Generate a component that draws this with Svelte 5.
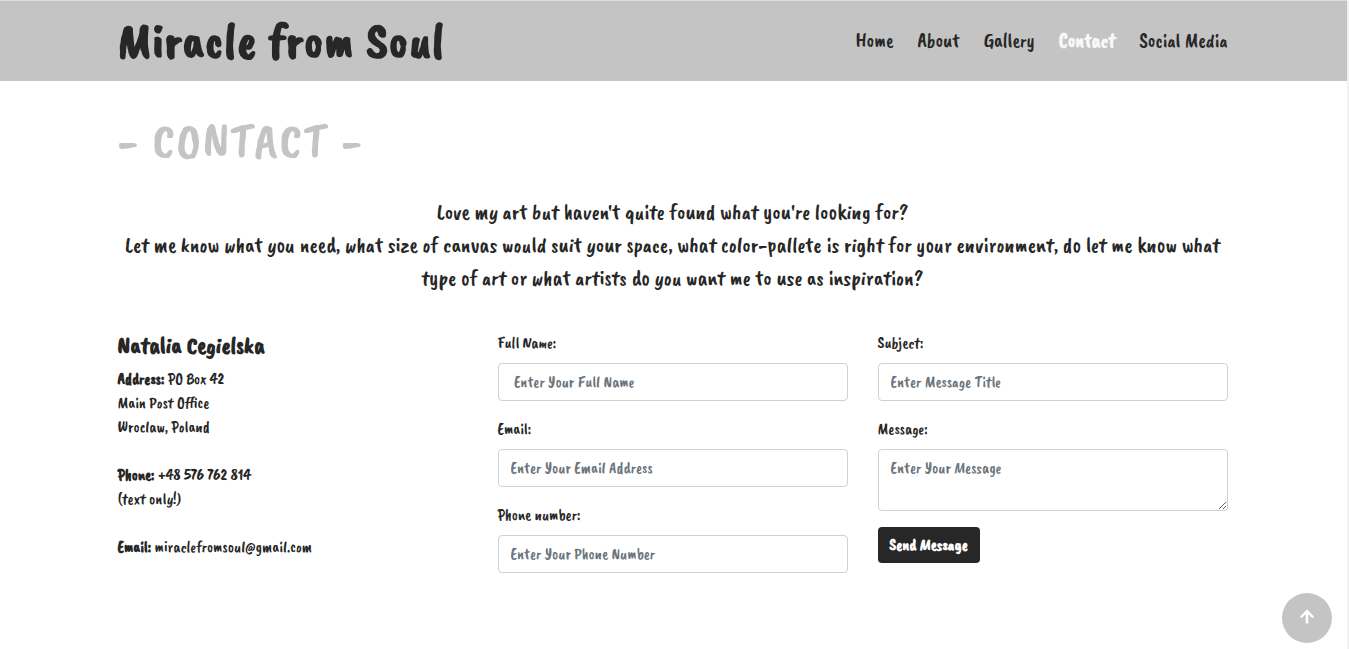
<script>
  const links = ['Home', 'About', 'Gallery', 'Contact', 'Social Media'];
  const fields = [
    { id: 'name', label: 'Full Name:', hint: ' Enter Your Full Name' },
    { id: 'email', label: 'Email:', hint: 'Enter Your Email Address' },
    { id: 'phone', label: 'Phone number:', hint: 'Enter Your Phone Number' },
  ];
</script>

<div class="page">
  <header>
    <div class="container bar">
      <a class="brand" href="#top">Miracle from Soul</a>
      <nav>
        {#each links as link}
          <a href="#top" class:active={link === 'Contact'}>{link}</a>
        {/each}
      </nav>
    </div>
  </header>

  <main class="container">
    <h1>- CONTACT -</h1>
    <p class="intro">
      Love my art but haven't quite found what you're looking for?<br />
      Let me know what you need, what size of canvas would suit your space, what color-pallete is right for your environment, do let me know what type of art or what artists do you want me to use as inspiration?
    </p>

    <div class="columns">
      <section>
        <h2>Natalia Cegielska</h2>
        <address>
          <b>Address:</b> PO Box 42<br />
          Main Post Office<br />
          Wroclaw, Poland<br />
          <br />
          <b>Phone:</b> +48 576 762 814<br />
          (text only!)<br />
          <br />
          <b>Email:</b> miraclefromsoul@gmail.com
        </address>
      </section>

      <section>
        {#each fields as f}
          <div class="group">
            <label for={f.id}>{f.label}</label>
            <input id={f.id} placeholder={f.hint} />
          </div>
        {/each}
      </section>

      <section>
        <div class="group">
          <label for="subject">Subject:</label>
          <input id="subject" placeholder="Enter Message Title" />
        </div>
        <div class="group">
          <label for="message">Message:</label>
          <textarea id="message" placeholder="Enter Your Message"></textarea>
        </div>
        <button type="button">Send Message</button>
      </section>
    </div>
  </main>

  <a class="to-top" href="#top" aria-label="Back to top">
    <svg width="16" height="16" viewBox="0 0 16 16" fill="none" stroke="#fff" stroke-width="2.5">
      <path d="M8 14.5V2.5M1.8 8.3L8 2.2l6.2 6.1" />
    </svg>
  </a>
</div>

<style>
  :global(body) {
    background: #fff;
    overflow: hidden;
  }
  .page {
    box-sizing: border-box;
    height: 649px;
    position: relative;
    border-right: 2px solid #f1f1f1;
    font: 16px/24px 'Caveat Brush', 'Liberation Sans', cursive;
    color: #272727;
  }
  .container {
    width: 1110px;
    margin: 0 0 0 117.5px;
  }
  header {
    box-sizing: border-box;
    height: 81px;
    background: #c4c4c4;
    border-top: 1px solid #dcdcdc;
  }
  .bar {
    display: flex;
    align-items: center;
    justify-content: space-between;
    height: 80px;
  }
  a {
    color: inherit;
    text-decoration: none;
    white-space: nowrap;
  }
  .brand {
    font-size: 50px;
    font-weight: 700;
    line-height: 74px;
    letter-spacing: 1px;
  }
  nav {
    display: flex;
    gap: 24px;
    font-size: 20px;
    line-height: 30px;
  }
  nav .active {
    color: #f8f8f8;
    font-weight: 700;
  }
  h1 {
    margin: 31px 0 0;
    font-size: 50px;
    line-height: 58px;
    font-weight: 400;
    letter-spacing: 2px;
    color: #c4c4c4;
  }
  .intro {
    margin: 26px 0 0;
    font-size: 22px;
    line-height: 33px;
    text-align: center;
  }
  .columns {
    display: grid;
    grid-template-columns: repeat(3, 350px);
    gap: 30px;
    margin-top: 36px;
  }
  h2 {
    margin: 0 0 7px;
    font-size: 24px;
    line-height: 29px;
  }
  address {
    font-style: normal;
  }
  .group {
    margin-bottom: 16px;
  }
  label {
    display: block;
    margin-bottom: 8px;
  }
  input,
  textarea {
    box-sizing: border-box;
    display: block;
    width: 100%;
    height: 38px;
    margin: 0;
    padding: 6px 12px;
    border: 1px solid #ced0d2;
    border-radius: 4px;
    background: #fff;
    font: inherit;
    color: #495057;
  }
  textarea {
    height: 62px;
    resize: vertical;
  }
  ::placeholder {
    color: #6c757d;
    opacity: 1;
  }
  button {
    display: block;
    width: 102px;
    height: 36px;
    padding: 0;
    border: 0;
    border-radius: 4px;
    background: #272727;
    color: #fff;
    font: inherit;
    font-weight: 700;
    white-space: nowrap;
  }
  .to-top {
    position: absolute;
    right: 15px;
    bottom: 6px;
    width: 50px;
    height: 50px;
    border-radius: 50%;
    background: #c4c4c4;
    display: flex;
    align-items: center;
    justify-content: center;
    box-sizing: border-box;
    padding-bottom: 2px;
  }
</style>
